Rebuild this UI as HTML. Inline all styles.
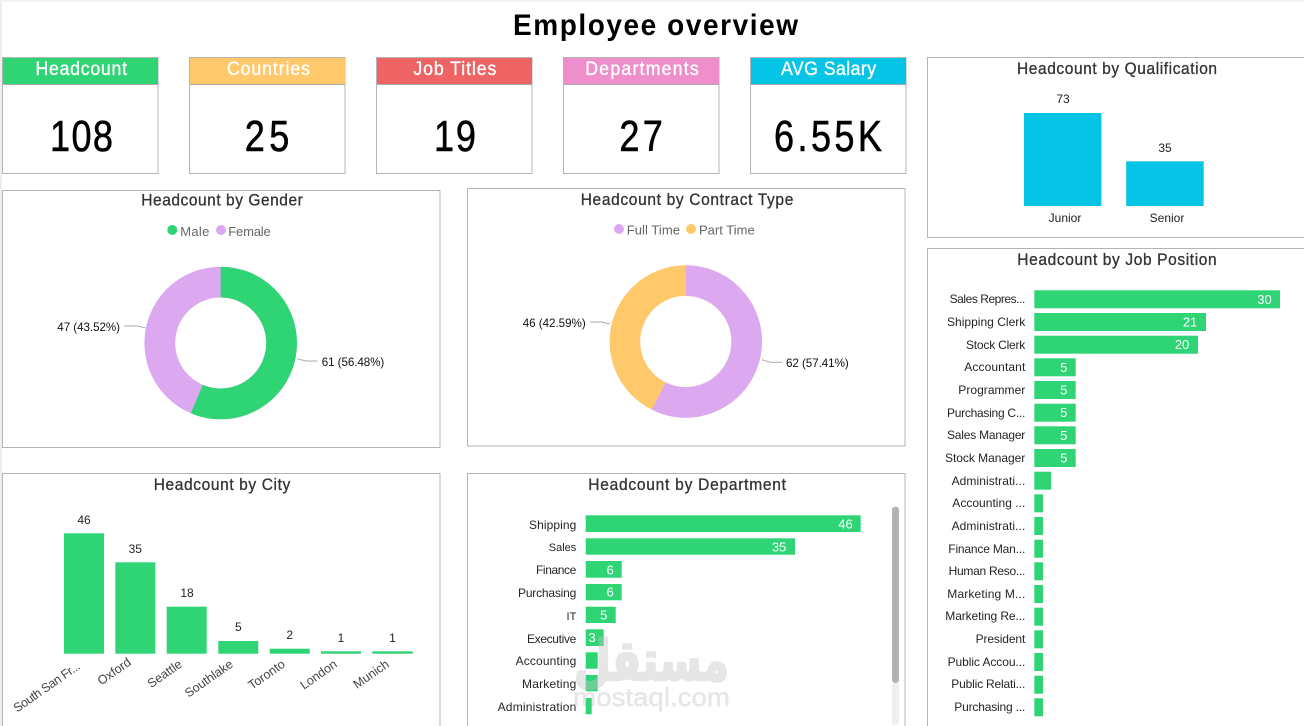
<!DOCTYPE html>
<html><head><meta charset="utf-8"><style>
html,body{margin:0;padding:0;background:#fff;width:1304px;height:726px;overflow:hidden}
svg{display:block;position:absolute;left:0;top:0}
text{font-family:"Liberation Sans",sans-serif}
.p{fill:#fff;stroke:#b4b4b4;stroke-width:1}
.t{font-size:16.5px;fill:#333;stroke:#333;stroke-width:.3}
.h{font-size:19px;fill:#fff;stroke:#fff;stroke-width:.35}
.v{font-size:44px;fill:#000;stroke:#000;stroke-width:.6}
.l{font-size:12px;fill:#252525;text-anchor:end}
.w{font-size:13px;fill:#fff;text-anchor:end}
.n{font-size:12px;fill:#222;text-anchor:middle}
.c{font-size:12.5px;fill:#444;text-anchor:end}
.g{font-size:13px;fill:#666}
.d{font-size:11.6px;fill:#111}
.ln{fill:none;stroke:#aaa;stroke-width:1}
</style></head><body>
<svg width="1304" height="726" viewBox="0 0 1304 726" xmlns="http://www.w3.org/2000/svg">
<rect width="1304" height="726" fill="#fff"/>
<rect width="1304" height="2" fill="#f1f1f1"/>
<rect width="2" height="726" fill="#eee"/>

<text transform="translate(513 35) scale(.95 1)" font-size="29.5" font-weight="bold" fill="#000" textLength="300">Employee overview</text>

<!-- KPI cards -->
<rect class="p" x="2.5" y="57.5" width="155.5" height="116"/>
<rect x="3" y="58" width="155" height="26" fill="#2fd475"/><rect x="3" y="84" width="155" height="1" fill="#aaa"/>
<text class="h" transform="translate(35.5 75) scale(.93 1)" textLength="98.4">Headcount</text>
<text class="v" transform="translate(50 151) scale(.82 1)" textLength="76.8">108</text>

<rect class="p" x="189.5" y="57.5" width="155.5" height="116"/>
<rect x="190" y="58" width="155" height="26" fill="#ffc86b"/><rect x="190" y="84" width="155" height="1" fill="#aaa"/>
<text class="h" transform="translate(227 75) scale(.93 1)" textLength="89.2">Countries</text>
<text class="v" transform="translate(244.8 151) scale(.82 1)" textLength="54.3">25</text>

<rect class="p" x="376.5" y="57.5" width="155.5" height="116"/>
<rect x="377" y="58" width="155" height="26" fill="#ee6363"/><rect x="377" y="84" width="155" height="1" fill="#aaa"/>
<text class="h" transform="translate(413.4 75) scale(.93 1)" textLength="89.2">Job Titles</text>
<text class="v" transform="translate(434 151) scale(.82 1)" textLength="51.2">19</text>

<rect class="p" x="563.5" y="57.5" width="155.5" height="116"/>
<rect x="564" y="58" width="155" height="26" fill="#ee8fcb"/><rect x="564" y="84" width="155" height="1" fill="#aaa"/>
<text class="h" transform="translate(585.3 75) scale(.93 1)" textLength="122">Departments</text>
<text class="v" transform="translate(619.4 151) scale(.82 1)" textLength="53">27</text>

<rect class="p" x="750.5" y="57.5" width="155.5" height="116"/>
<rect x="751" y="58" width="155" height="26" fill="#06c4e6"/><rect x="751" y="84" width="155" height="1" fill="#aaa"/>
<text class="h" transform="translate(781 75) scale(.93 1)" textLength="102.2">AVG Salary</text>
<text class="v" transform="translate(774 151) scale(.82 1)" textLength="131.7">6.55K</text>

<!-- Panels -->
<rect class="p" x="2.5" y="190.5" width="437.5" height="257"/>
<rect class="p" x="467.5" y="188.5" width="437.5" height="257.5"/>
<rect class="p" x="2.5" y="473.5" width="437.5" height="260"/>
<rect class="p" x="467.5" y="473.5" width="437.5" height="260"/>
<rect class="p" x="927.5" y="57.5" width="380" height="180"/>
<rect class="p" x="927.5" y="248.5" width="380" height="490"/>

<text class="t" transform="translate(141.3 205.5) scale(.94 1)" textLength="171.8">Headcount by Gender</text>
<text class="t" transform="translate(580.7 205) scale(.94 1)" textLength="226.2">Headcount by Contract Type</text>
<text class="t" transform="translate(153.7 490) scale(.94 1)" textLength="145.3">Headcount by City</text>
<text class="t" transform="translate(588.3 490) scale(.94 1)" textLength="210.3">Headcount by Department</text>
<text class="t" transform="translate(1017 74) scale(.94 1)" textLength="212.8">Headcount by Qualification</text>
<text class="t" transform="translate(1017.3 265) scale(.94 1)" textLength="212.1">Headcount by Job Position</text>

<!-- Gender donut -->
<circle cx="172.3" cy="230" r="5" fill="#2fd475"/><text class="g" x="180.3" y="236" textLength="29">Male</text>
<circle cx="221" cy="230" r="5" fill="#dca8f0"/><text class="g" x="228.3" y="236" textLength="42.4">Female</text>
<circle cx="220.7" cy="343" r="60.9" fill="none" stroke="#dca8f0" stroke-width="30.8"/>
<circle cx="220.7" cy="343" r="60.9" fill="none" stroke="#2fd475" stroke-width="30.8" pathLength="100" stroke-dasharray="56.48 100" transform="rotate(-90 220.7 343)"/>
<path class="ln" d="M124.3 326H136.7L145.3 327.7"/>
<path class="ln" d="M297 358.7L306 361H317.3"/>
<text class="d" x="57.3" y="331" textLength="62.7">47 (43.52%)</text>
<text class="d" x="321.7" y="366" textLength="62.6">61 (56.48%)</text>

<!-- Contract donut -->
<circle cx="619" cy="229" r="5" fill="#dca8f0"/><text class="g" x="626.7" y="234.5" textLength="53.3">Full Time</text>
<circle cx="691" cy="229" r="5" fill="#ffc86b"/><text class="g" x="699" y="234.5" textLength="55.7">Part Time</text>
<circle cx="685.8" cy="341.5" r="60.9" fill="none" stroke="#ffc86b" stroke-width="30.6"/>
<circle cx="685.8" cy="341.5" r="60.9" fill="none" stroke="#dca8f0" stroke-width="30.6" pathLength="100" stroke-dasharray="57.41 100" transform="rotate(-90 685.8 341.5)"/>
<path class="ln" d="M590 322H601.7L610 324"/>
<path class="ln" d="M762 359.7L770.7 362.3H782"/>
<text class="d" x="522.7" y="327" textLength="63">46 (42.59%)</text>
<text class="d" x="786" y="367" textLength="62.7">62 (57.41%)</text>

<!-- Qualification -->
<rect x="1024" y="113" width="77.4" height="93" fill="#06c4e6"/>
<rect x="1126.2" y="161.3" width="77.5" height="44.7" fill="#06c4e6"/>
<text class="n" x="1063" y="103">73</text><text class="n" x="1165" y="152">35</text>
<text class="n" x="1065" y="222">Junior</text><text class="n" x="1167" y="222">Senior</text>

<!-- City -->
<g fill="#2fd475">
<rect x="64" y="533.3" width="40" height="120.4"/>
<rect x="115.3" y="562.3" width="40" height="91.4"/>
<rect x="166.7" y="606.7" width="40" height="47"/>
<rect x="218.3" y="641" width="40" height="12.7"/>
<rect x="269.7" y="648.7" width="40" height="5"/>
<rect x="321" y="651.3" width="40" height="2.4"/>
<rect x="372.3" y="651.3" width="40.4" height="2.4"/>
</g>
<text class="n" x="84" y="524">46</text><text class="n" x="135.3" y="553">35</text><text class="n" x="187" y="597">18</text><text class="n" x="238.3" y="631">5</text><text class="n" x="289.7" y="639">2</text><text class="n" x="341" y="642">1</text><text class="n" x="392.5" y="642">1</text>
<text class="c" transform="translate(81 668) rotate(-35)" textLength="78">South San Fr...</text>
<text class="c" transform="translate(132 664) rotate(-35)">Oxford</text>
<text class="c" transform="translate(183 666) rotate(-35)">Seattle</text>
<text class="c" transform="translate(234 666) rotate(-35)">Southlake</text>
<text class="c" transform="translate(286 666) rotate(-35)">Toronto</text>
<text class="c" transform="translate(338 666) rotate(-35)">London</text>
<text class="c" transform="translate(390 666) rotate(-35)">Munich</text>

<!-- Department -->
<g fill="#2fd475">
<rect x="585.7" y="515.3" width="275" height="16.7"/>
<rect x="585.7" y="538.3" width="209.3" height="16.4"/>
<rect x="585.7" y="561" width="36" height="16.7"/>
<rect x="585.7" y="584" width="36" height="16.3"/>
<rect x="585.7" y="606.7" width="30" height="16.3"/>
<rect x="585.7" y="629.3" width="18" height="16.7"/>
<rect x="585.7" y="652.3" width="12" height="16.4"/>
<rect x="585.7" y="675" width="12" height="16.3"/>
<rect x="585.7" y="698" width="6" height="16.3"/>
</g>
<text class="l" x="576.3" y="529" textLength="47.3">Shipping</text>
<text class="l" x="576.3" y="551" font-size="11" style="font-size:11px">Sales</text>
<text class="l" x="576.3" y="574" textLength="40.3">Finance</text>
<text class="l" x="576.3" y="597" textLength="58.3">Purchasing</text>
<text class="l" x="576.3" y="620" style="font-size:11px">IT</text>
<text class="l" x="576.3" y="643" textLength="49.3">Executive</text>
<text class="l" x="576.3" y="665" textLength="60.7">Accounting</text>
<text class="l" x="576.3" y="688" textLength="54.3">Marketing</text>
<text class="l" x="576.3" y="711" textLength="78.7">Administration</text>
<text class="w" x="852.7" y="528.5">46</text>
<text class="w" x="786.3" y="551.5">35</text>
<text class="w" x="613.7" y="574.5">6</text>
<text class="w" x="613.7" y="596.5">6</text>
<text class="w" x="607.3" y="619.5">5</text>
<text class="w" x="595.7" y="642">3</text>
<rect x="892" y="506.7" width="7" height="176.3" rx="3" fill="#b3b3b3"/>
<rect x="892" y="683" width="7" height="42" rx="3" fill="#efefef"/>

<!-- Job position -->
<g fill="#2fd475">
<rect x="1034.3" y="290.3" width="245.7" height="18"/>
<rect x="1034.3" y="313" width="171.7" height="18"/>
<rect x="1034.3" y="335.7" width="163.7" height="18"/>
<rect x="1034.3" y="358.3" width="41.4" height="18"/>
<rect x="1034.3" y="381" width="41.4" height="18"/>
<rect x="1034.3" y="403.7" width="41.4" height="18"/>
<rect x="1034.3" y="426.3" width="41.4" height="18"/>
<rect x="1034.3" y="449" width="41.4" height="18"/>
<rect x="1034.3" y="471.7" width="16.7" height="18"/>
<rect x="1034.3" y="494.3" width="8.7" height="18"/>
<rect x="1034.3" y="517" width="8.7" height="18"/>
<rect x="1034.3" y="539.7" width="8.7" height="18"/>
<rect x="1034.3" y="562.3" width="8.7" height="18"/>
<rect x="1034.3" y="585" width="8.7" height="18"/>
<rect x="1034.3" y="607.7" width="8.7" height="18"/>
<rect x="1034.3" y="630.3" width="8.7" height="18"/>
<rect x="1034.3" y="653" width="8.7" height="18"/>
<rect x="1034.3" y="675.7" width="8.7" height="18"/>
<rect x="1034.3" y="698.3" width="8.7" height="18"/>
</g>
<text class="l" x="1025.3" y="303" textLength="75.7">Sales Repres...</text>
<text class="l" x="1025.3" y="326" textLength="78.3">Shipping Clerk</text>
<text class="l" x="1025.3" y="349" textLength="59.3">Stock Clerk</text>
<text class="l" x="1025.3" y="371" textLength="61">Accountant</text>
<text class="l" x="1025.3" y="394" textLength="67">Programmer</text>
<text class="l" x="1025.3" y="417" textLength="78.3">Purchasing C...</text>
<text class="l" x="1025.3" y="439" textLength="78.3">Sales Manager</text>
<text class="l" x="1025.3" y="462" textLength="80.3">Stock Manager</text>
<text class="l" x="1025.3" y="485" textLength="73.7">Administrati...</text>
<text class="l" x="1025.3" y="507" textLength="73">Accounting ...</text>
<text class="l" x="1025.3" y="530" textLength="73.7">Administrati...</text>
<text class="l" x="1025.3" y="553" textLength="77">Finance Man...</text>
<text class="l" x="1025.3" y="575" textLength="76.7">Human Reso...</text>
<text class="l" x="1025.3" y="598" textLength="78">Marketing M...</text>
<text class="l" x="1025.3" y="620" textLength="80">Marketing Re...</text>
<text class="l" x="1025.3" y="643" textLength="49.7">President</text>
<text class="l" x="1025.3" y="666" textLength="77.7">Public Accou...</text>
<text class="l" x="1025.3" y="688" textLength="74">Public Relati...</text>
<text class="l" x="1025.3" y="711" textLength="71">Purchasing ...</text>
<text class="w" x="1271.7" y="304">30</text>
<text class="w" x="1197.3" y="326.5">21</text>
<text class="w" x="1189.3" y="349">20</text>
<text class="w" x="1067.3" y="372">5</text>
<text class="w" x="1067.3" y="394.5">5</text>
<text class="w" x="1067.3" y="417">5</text>
<text class="w" x="1067.3" y="440">5</text>
<text class="w" x="1067.3" y="462.5">5</text>

<!-- Watermark -->
<g opacity=".42" fill="#c4c4c4">
<text x="574" y="680" font-size="56" font-weight="bold" stroke="#c4c4c4" stroke-width="2.5" stroke-linejoin="round" style="font-family:'DejaVu Sans',sans-serif" textLength="155" lengthAdjust="spacingAndGlyphs">مستقل</text>
<text x="573" y="706" font-size="26" textLength="157" lengthAdjust="spacingAndGlyphs" stroke="#c4c4c4" stroke-width=".5">mostaql.com</text>
</g>
</svg>
</body></html>
